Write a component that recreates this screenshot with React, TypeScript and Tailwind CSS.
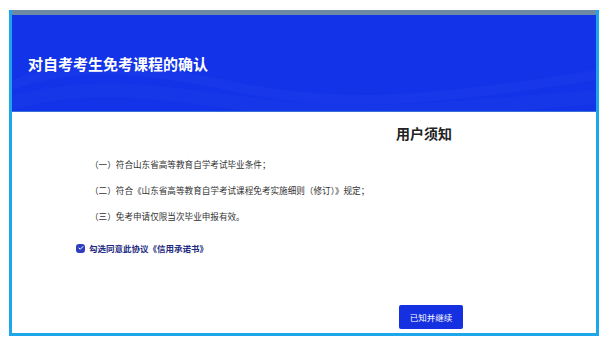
import { Check } from "lucide-react";

const rules = [
  "（一）符合山东省高等教育自学考试毕业条件；",
  "（二）符合《山东省高等教育自学考试课程免考实施细则（修订）》规定；",
  "（三）免考申请仅限当次毕业申报有效。",
];

export default function App() {
  return (
    <div
      className="w-[600px] h-[340px] bg-white pt-[10px] pl-[9px] pr-px pb-[4px]"
      style={{ fontFamily: '"Noto Sans CJK SC", "Noto Sans", sans-serif' }}
    >
      <div className="h-full flex flex-col border-x-[3px] border-b-[3px] border-[#1ea6ea]">
        {/* top bar */}
        <div className="h-[5px] bg-[#6e89a5]" />

        {/* Header */}
        <div className="h-[97px] bg-[#1233e8] relative overflow-hidden flex items-center pl-[16px] border-b border-[#3b6fd8]">
          <svg className="absolute inset-0" width="584" height="97" viewBox="0 0 584 97" fill="none">
            <path d="M0 70 C 80 40, 160 60, 240 75 S 400 90, 584 60" stroke="#ffffff" strokeOpacity="0.025" strokeWidth="10" />
            <path d="M0 88 C 90 62, 170 82, 260 92 S 420 96, 584 82" stroke="#ffffff" strokeOpacity="0.02" strokeWidth="14" />
          </svg>
          <h1 className="relative text-white text-[15px] font-bold leading-none">
            对自考考生免考课程的确认
          </h1>
        </div>

        {/* Body */}
        <div className="flex-1 flex flex-col">
          <div className="pl-[240px] pt-[11px] text-center">
            <h2 className="text-[14px] font-bold text-[#222] leading-[20px]">用户须知</h2>
          </div>

          <div className="pl-[78px] mt-[8px] text-[8.6px] text-[#333] leading-[26px]">
            {rules.map((r) => (
              <p key={r}>{r}</p>
            ))}
          </div>

          <label className="pl-[64px] mt-[11px] flex items-center gap-[4px] leading-[16px]">
            <span className="w-[9px] h-[9px] rounded-[3px] bg-[#2f3dbf] flex items-center justify-center">
              <Check className="w-[6px] h-[6px] text-white" strokeWidth={4} />
            </span>
            <span className="text-[8.5px] font-bold text-[#1d2a80]">勾选同意此协议《信用承诺书》</span>
          </label>

          <div className="mt-auto self-end mr-[133px] mb-[4px]">
            <button className="w-[64px] h-[24px] rounded-[2px] bg-[#1430e0] text-white text-[8.5px] flex items-center justify-center">
              已知并继续
            </button>
          </div>
        </div>
      </div>
    </div>
  );
}
